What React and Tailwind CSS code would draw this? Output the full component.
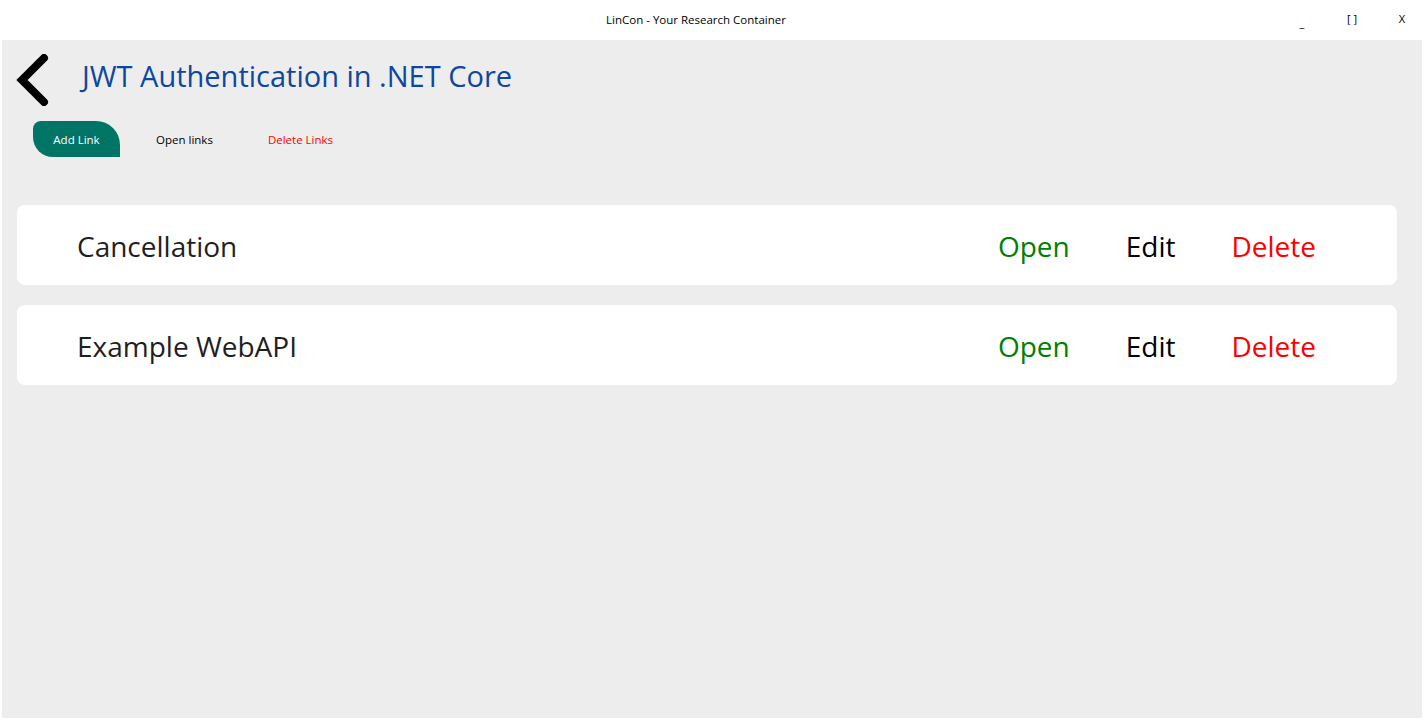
import React from "react";

const links = ["Cancellation", "Example WebAPI"];

function LinkRow({ name }) {
  return (
    <div className="flex h-20 items-center justify-between rounded-lg bg-white pl-[60px] pr-[81px]">
      <p className="pt-[2px] text-[28px] text-[#1f1f1f]">{name}</p>
      <div className="flex items-center pt-[2px] text-[28px]">
        <span className="text-[#008000]">Open</span>
        <span className="ml-[56px] text-black">Edit</span>
        <span className="ml-[56px] text-[#ff0000]">Delete</span>
      </div>
    </div>
  );
}

export default function App() {
  return (
    <div className="flex h-[720px] w-full flex-col bg-white font-['Open_Sans',sans-serif]">
      <div className="grid h-10 shrink-0 grid-cols-[1fr_auto_1fr] items-center text-[11.5px] text-black">
        <div />
        <p className="mr-[32px]">LinCon - Your Research Container</p>
        <div className="-mr-[3px] flex justify-end pt-[3px] text-[11px]">
          <span className="w-[50px] pt-[4px] text-center">_</span>
          <span className="w-[50px] text-center">[ ]</span>
          <span className="w-[50px] text-center">X</span>
        </div>
      </div>

      <div className="mx-[2px] mb-[2px] flex-1 bg-[#ededed]">
        <div className="flex items-center pl-[14px] pt-[14px]">
          <svg width="40" height="52" viewBox="0 0 40 52">
            <polyline points="28,4 6,26 28,48" fill="none" stroke="black" strokeWidth="8" strokeLinecap="round" strokeLinejoin="miter" />
          </svg>
          <h1 className="mb-[8px] ml-[26px] text-[29px] text-[#0d47a1]">JWT Authentication in .NET Core</h1>
        </div>

        <div className="mt-[15px] flex items-center pl-[31px] text-[11.5px]">
          <button className="h-9 w-[87px] rounded-tl-[8px] rounded-tr-[24px] rounded-bl-[20px] bg-[#007566] pt-[2px] text-white">Add Link</button>
          <button className="ml-[36px] pt-[2px] text-black">Open links</button>
          <button className="ml-[55px] pt-[2px] text-[#ff0000]">Delete Links</button>
        </div>

        <div className="mt-12 flex flex-col gap-5 pl-[15px] pr-[25px]">
          {links.map((l) => (
            <LinkRow key={l} name={l} />
          ))}
        </div>
      </div>
    </div>
  );
}
